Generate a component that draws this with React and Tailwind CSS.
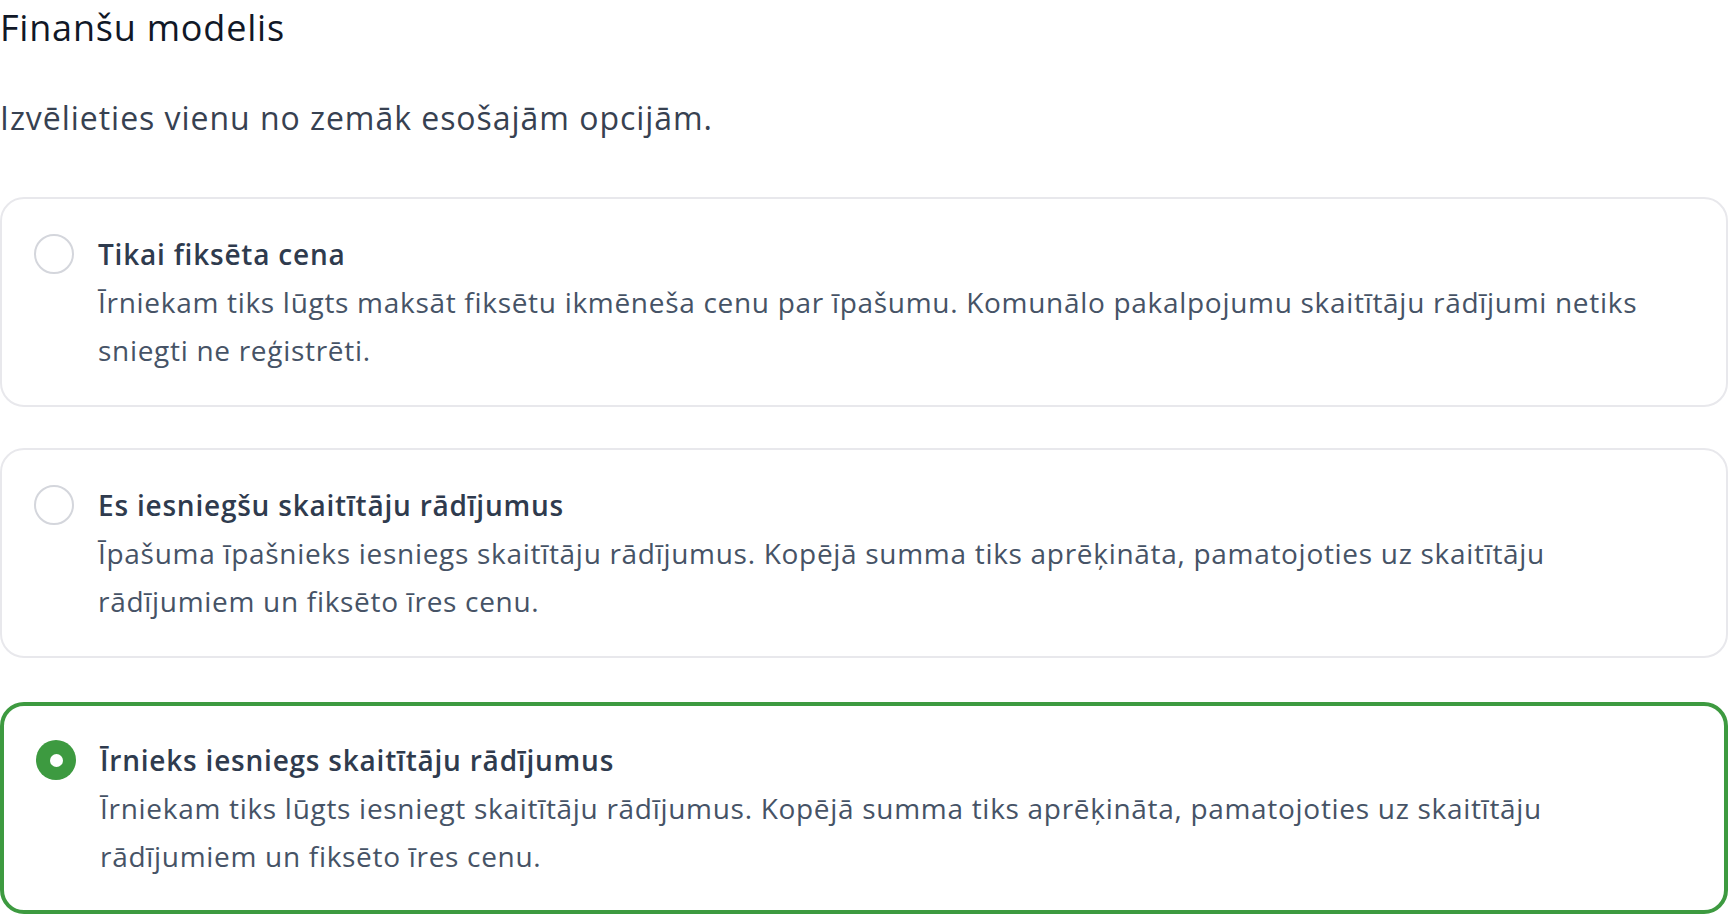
import { useState } from "react";

const OPTIONS = [
  {
    id: "fixed",
    title: "Tikai fiksēta cena",
    description:
      "Īrniekam tiks lūgts maksāt fiksētu ikmēneša cenu par īpašumu. Komunālo pakalpojumu skaitītāju rādījumi netiks sniegti ne reģistrēti.",
  },
  {
    id: "owner",
    title: "Es iesniegšu skaitītāju rādījumus",
    description:
      "Īpašuma īpašnieks iesniegs skaitītāju rādījumus. Kopējā summa tiks aprēķināta, pamatojoties uz skaitītāju rādījumiem un fiksēto īres cenu.",
  },
  {
    id: "tenant",
    title: "Īrnieks iesniegs skaitītāju rādījumus",
    description:
      "Īrniekam tiks lūgts iesniegt skaitītāju rādījumus. Kopējā summa tiks aprēķināta, pamatojoties uz skaitītāju rādījumiem un fiksēto īres cenu.",
  },
];

function OptionCard({ option, checked, onSelect }) {
  return (
    <label
      className={`flex cursor-pointer items-start rounded-[24px] bg-white px-[32px] ${
        checked
          ? "border-[4px] border-[#3d9a40] py-[30px]"
          : "border-[2px] border-[#e8e8ec] py-[31px]"
      }`}
    >
      <input
        type="radio"
        name="finance-model"
        className="sr-only"
        checked={checked}
        onChange={onSelect}
      />
      <span className="flex h-[48px] shrink-0 items-center">
        {checked ? (
          <span className="flex h-[40px] w-[40px] items-center justify-center rounded-full bg-[#3d9a40]">
            <span className="h-[13px] w-[13px] rounded-full bg-white" />
          </span>
        ) : (
          <span className="h-[40px] w-[40px] rounded-full border-[2px] border-[#d4d6dc] bg-white" />
        )}
      </span>
      <span className="ml-[24px] flex flex-col text-[28px] leading-[48px]">
        <span className="font-semibold tracking-[0.028em] text-[#2f3b4e]">{option.title}</span>
        <span className="tracking-[0.025em] text-[#465366]">{option.description}</span>
      </span>
    </label>
  );
}

export default function App() {
  const [selected, setSelected] = useState("tenant");

  return (
    <div className="min-h-screen bg-white font-['Open_Sans',sans-serif]">
      <h2 className="text-[36px] leading-[56px] tracking-[0.022em] text-[#111827]">
        Finanšu modelis
      </h2>
      <p className="mt-[38px] text-[32px] leading-[48px] tracking-[0.03em] text-[#374151]">
        Izvēlieties vienu no zemāk esošajām opcijām.
      </p>

      <div className="mt-[55px] flex flex-col">
        {OPTIONS.map((option, index) => (
          <div
            key={option.id}
            className={index === 0 ? "" : index === 1 ? "mt-[41px]" : "mt-[44px]"}
          >
            <OptionCard
              option={option}
              checked={selected === option.id}
              onSelect={() => setSelected(option.id)}
            />
          </div>
        ))}
      </div>
    </div>
  );
}
